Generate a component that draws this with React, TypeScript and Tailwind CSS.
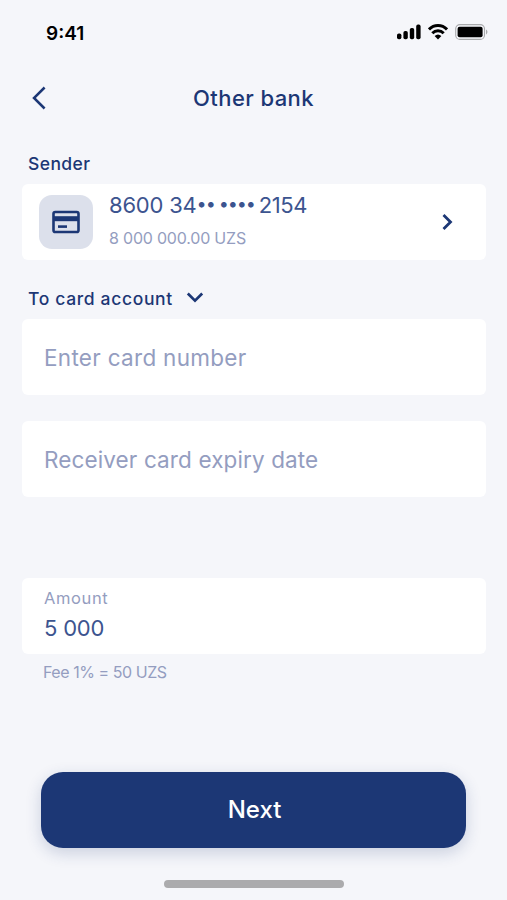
import { useState } from "react";

function SignalIcon() {
  return (
    <svg width="24" height="16" viewBox="0 0 24 16" fill="#000">
      <rect x="0" y="9.5" width="4.4" height="5.8" rx="1.8" />
      <rect x="6.4" y="7" width="4.4" height="8.3" rx="1.8" />
      <rect x="12.8" y="4" width="4.4" height="11.3" rx="1.8" />
      <rect x="19.2" y="0.6" width="4.4" height="14.7" rx="1.8" />
    </svg>
  );
}

function WifiIcon() {
  return (
    <svg width="20" height="16" viewBox="0 0 20 16" fill="none" stroke="#000" strokeWidth="2.9">
      <path d="M1 5.4C6 0.2 14 0.2 19 5.4" />
      <path d="M4.3 9.2C7.5 5.9 12.5 5.9 15.7 9.2" />
      <path d="M6.6 12Q10 9 13.4 12L10 15.4Z" fill="#000" stroke="none" />
    </svg>
  );
}

function BatteryIcon() {
  return (
    <svg width="33" height="16" viewBox="0 0 33 16">
      <rect x="0.7" y="0.6" width="28.8" height="14.8" rx="4.2" fill="none" stroke="#a9aaac" strokeWidth="1.1" />
      <rect x="2.6" y="2.8" width="25" height="10.4" rx="2" fill="#000" />
      <path d="M31 5.6c1.9.8 1.9 4 0 4.8z" fill="#a9aaac" />
    </svg>
  );
}

function CardIcon() {
  return (
    <svg width="28" height="24" viewBox="0 0 28 24" fill="none" stroke="#1c3775">
      <rect x="1.5" y="2" width="25" height="20" rx="1.8" strokeWidth="2.6" />
      <path d="M1.5 8.7h25" strokeWidth="5" />
      <path d="M6 16.6h9" strokeWidth="2.6" />
    </svg>
  );
}

export default function App() {
  const [cardNumber, setCardNumber] = useState("");
  const [expiry, setExpiry] = useState("");
  const [amount, setAmount] = useState("5 000");

  return (
    <main className="flex h-[900px] w-full flex-col bg-[#f5f6fa] font-['Inter','Open_Sans',sans-serif] text-[#1c3775]">
      <div className="flex h-[66px] items-center justify-between pr-[19px] pl-[46px]">
        <span className="pt-[2px] text-[19px] font-semibold text-black">9:41</span>
        <div className="mb-[3px] flex items-center gap-[7px]">
          <SignalIcon />
          <WifiIcon />
          <BatteryIcon />
        </div>
      </div>

      <header className="grid h-[64px] grid-cols-[60px_1fr_60px] items-center">
        <button type="button" className="pl-[31px]">
          <svg width="16" height="24" viewBox="0 0 16 24" fill="none" stroke="#1c3775" strokeWidth="2.5">
            <path d="M13.6 1.5L3 12l10.6 10.500" />
          </svg>
        </button>
        <h1 className="text-center text-[22px] font-medium tracking-[0.42px]">Other bank</h1>
      </header>

      <section className="pr-[21px] pl-[22px]">
        <div className="flex h-[54px] items-center pt-[14px] pl-[6px] text-[17.5px] font-medium tracking-[0.4px]">Sender</div>
        <button type="button" className="flex h-[76px] w-full items-center rounded-md bg-white pr-[32px] pl-[17px] text-left">
          <span className="flex size-[54px] items-center justify-center rounded-[13px] bg-[#dce0eb]">
            <CardIcon />
          </span>
          <span className="ml-[16px] flex-1 pb-[2px]">
            <span className="flex h-[34px] items-center text-[22px] text-[#3c548f]">
              <span className="tracking-[-0.2px]">8600 34</span>
              <span className="mr-[4px] pb-[3px] text-[18px] tracking-[-1.1px]">••</span>
              <span className="mr-[4px] pb-[3px] text-[18px] tracking-[-1.1px]">••••</span>
              <span className="tracking-[-0.4px]">2154</span>
            </span>
            <span className="flex h-[32px] items-center text-[16px] tracking-[-0.2px] text-[#949dc0]">8 000 000.00 UZS</span>
          </span>
          <svg width="14" height="18" viewBox="0 0 14 18" fill="none" stroke="#1c3775" strokeWidth="2.8">
            <path d="M3.5 2l7 7-7 7" />
          </svg>
        </button>

        <button type="button" className="flex h-[59px] items-center gap-[13px] pt-[17px] pl-[6px] text-[17.5px] font-medium">
          <span className="pt-[2px] tracking-[0.65px]">To card account</span>
          <svg width="18" height="12" viewBox="0 0 18 12" fill="none" stroke="#1c3775" strokeWidth="2.7">
            <path d="M1.8 1.500L9 8.7l7.2-7.200" />
          </svg>
        </button>
        <input
          className="h-[76px] w-full rounded-md bg-white px-[22px] text-[22.5px] tracking-[0.3px] outline-none placeholder:text-[#949dc0]"
          placeholder="Enter card number"
          value={cardNumber}
          onChange={(e) => setCardNumber(e.target.value)}
        />
        <input
          className="mt-[26px] h-[76px] w-full rounded-md bg-white px-[22px] pt-[1px] text-[22.5px] tracking-[0.12px] outline-none placeholder:text-[#949dc0]"
          placeholder="Receiver card expiry date"
          value={expiry}
          onChange={(e) => setExpiry(e.target.value)}
        />

        <label className="mt-[81px] flex h-[76px] flex-col rounded-md bg-white px-[22px] pt-[6px]">
          <span className="flex h-[28px] items-center text-[16.5px] tracking-[0.6px] text-[#949dc0]">Amount</span>
          <input
            className="h-[32px] w-full text-[22px] tracking-[-0.2px] text-[#3c548f] outline-none"
            value={amount}
            onChange={(e) => setAmount(e.target.value)}
          />
        </label>
        <p className="mt-[6px] pl-[21px] text-[16px] leading-[24px] tracking-[-0.45px] text-[#949dc0]">Fee 1% = 50 UZS</p>
      </section>

      <footer className="mt-auto flex flex-col items-center pb-[12px]">
        <button
          type="button"
          className="h-[76px] w-[425px] rounded-[22px] bg-[#1c3775] pl-[2px] text-[24px] font-medium text-white shadow-[0_5px_16px_rgba(28,55,117,0.2)]"
        >
          Next
        </button>
        <div className="mt-[32px] h-[8px] w-[180px] rounded-full bg-[#ababad]" />
      </footer>
    </main>
  );
}
